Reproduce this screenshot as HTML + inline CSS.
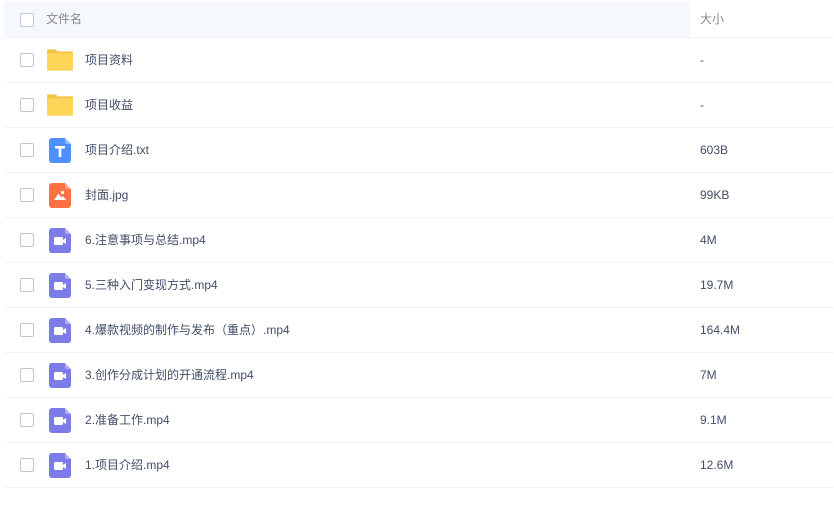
<!DOCTYPE html><html><head><meta charset="utf-8"><style>
body{margin:0;width:834px;height:517px;background:#fff;font-family:"Liberation Sans","Noto Sans CJK SC",sans-serif;font-size:12px;line-height:16px;color:#424e67;position:relative;overflow:hidden}
.hd{position:absolute;left:4px;top:2px;width:686px;height:36px;background:#f5f8fd}
.row{position:absolute;left:4px;width:829px;height:45px;box-sizing:border-box;border-bottom:1px solid #f0f2f6}
.cb{position:absolute;left:16px;width:12px;height:12px;border:1px solid #bfc7d3;border-radius:2px;background:#fff}
.t{position:absolute;left:81px}
.s{position:absolute;left:696px}
.ic{position:absolute}
</style></head><body>
<div class="hd"></div>
<div class="cb" style="left:20px;top:13px"></div>
<div style="position:absolute;left:46px;top:11px;color:#888">文件名</div>
<div style="position:absolute;left:700px;top:11px;color:#888">大小</div>
<div style="position:absolute;left:4px;top:37px;width:829px;border-top:1px solid #f0f2f6"></div>
<script>
const rows=[["f","项目资料","-"],["f","项目收益","-"],["t","项目介绍.txt","603B"],["i","封面.jpg","99KB"],["v","6.注意事项与总结.mp4","4M"],["v","5.三种入门变现方式.mp4","19.7M"],["v","4.爆款视频的制作与发布（重点）.mp4","164.4M"],["v","3.创作分成计划的开通流程.mp4","7M"],["v","2.准备工作.mp4","9.1M"],["v","1.项目介绍.mp4","12.6M"]];
const doc=(c,inner)=>`<svg class="ic" style="left:45px;top:10px" width="22" height="25" viewBox="0 0 22 25"><path d="M3 0H16L22 6V22a3 3 0 0 1-3 3H3a3 3 0 0 1-3-3V3a3 3 0 0 1 3-3z" fill="${c}"/><path d="M16 0L22 6H18a2 2 0 0 1-2-2z" fill="#fff" opacity=".4"/>${inner}</svg>`;
let h="";
rows.forEach((r,i)=>{const top=38+i*45;let ic="";
if(r[0]=="f")ic=`<svg class="ic" style="left:43px;top:11px" width="26" height="22" viewBox="0 0 27 22"><path d="M1 0H9L11 2H26a1 1 0 0 1 1 1V21a1 1 0 0 1-1 1H1a1 1 0 0 1-1-1V1a1 1 0 0 1 1-1z" fill="#f3c444"/><rect x="0" y="4" width="27" height="18" rx="1" fill="#ffd659"/></svg>`;
if(r[0]=="t")ic=doc("#4d90fe",`<path d="M6 8H16V10.5H12.3V19H9.7V10.5H6z" fill="#fff"/>`);
if(r[0]=="i")ic=doc("#ff7043",`<circle cx="13.5" cy="9.5" r="1.6" fill="#fff"/><path d="M5 17L9.5 10.5L12.5 14.5L14 13L17 17z" fill="#fff"/>`);
if(r[0]=="v")ic=doc("#7c7ce8",`<rect x="5" y="9" width="9" height="8" rx="1.5" fill="#fff"/><path d="M14 12L17 10V16L14 14z" fill="#fff"/>`);
h+=`<div class="row" style="top:${top}px"><div class="cb" style="top:15px"></div>${ic}<div class="t" style="top:14px">${r[1]}</div><div class="s" style="top:14px">${r[2]}</div></div>`;});
document.write(h);
</script>
</body></html>
